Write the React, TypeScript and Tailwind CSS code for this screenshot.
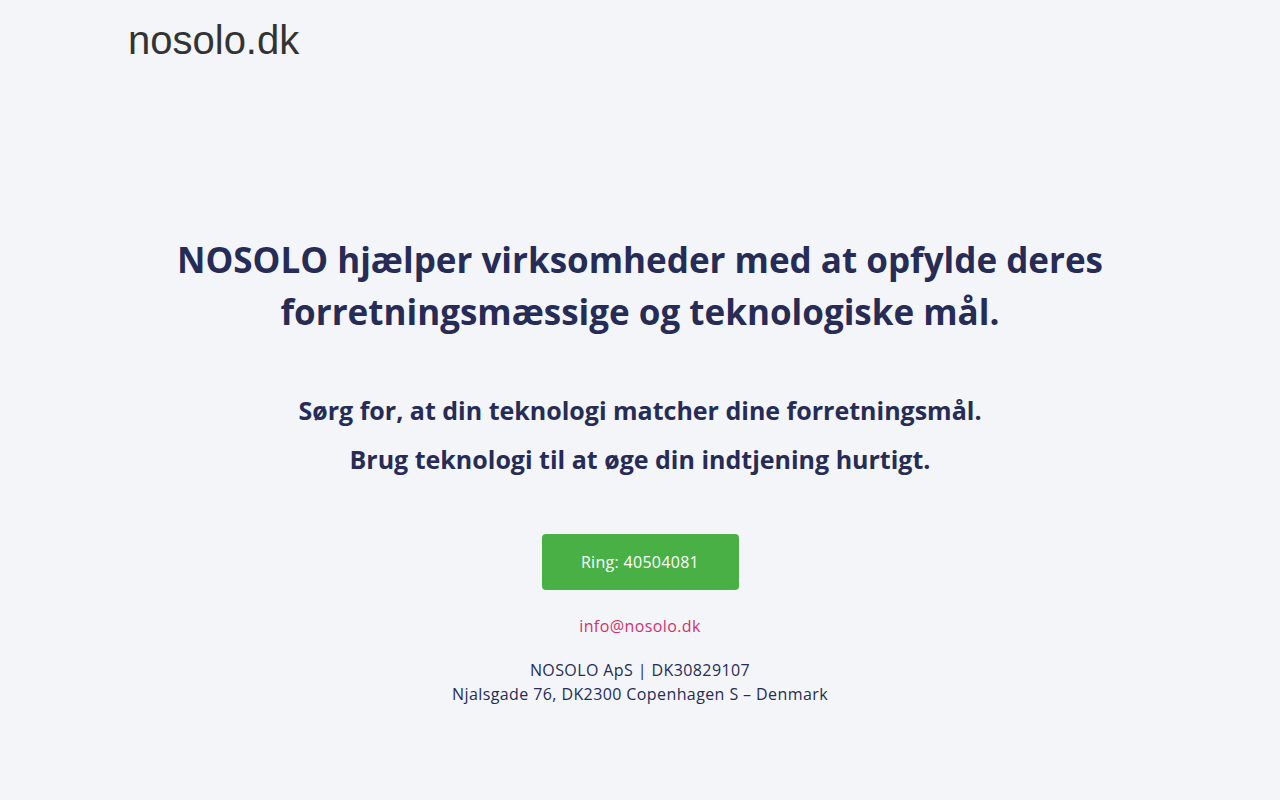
export default function App() {
  const font = { fontFamily: '"Open Sans", "Noto Sans", sans-serif' };
  return (
    <div className="min-h-[800px] bg-[#f3f5f9] text-[#262c55]" style={font}>
      <header className="max-w-[1024px] mx-auto pt-[16px]">
        <a
          href="#"
          className="text-[40px] leading-[48px] text-[#333333]"
          style={{ fontFamily: '"Liberation Sans", Arial, sans-serif' }}
        >
          nosolo.dk
        </a>
      </header>

      <main className="flex flex-col items-center text-center pt-[170px]">
        <h1 className="text-[35px] leading-[52px] font-bold max-w-[980px]">
          NOSOLO hjælper virksomheder med at opfylde deres forretningsmæssige og teknologiske mål.
        </h1>

        <div className="mt-[54px] flex flex-col gap-[13px]">
          <h2 className="text-[25px] leading-[36px] font-bold">
            Sørg for, at din teknologi matcher dine forretningsmål.
          </h2>
          <h2 className="text-[25px] leading-[36px] font-bold">
            Brug teknologi til at øge din indtjening hurtigt.
          </h2>
        </div>

        <a
          href="#"
          className="mt-[57px] w-[197px] h-[56px] flex items-center justify-center rounded-[4px] bg-[#48b045] text-white text-[16px] tracking-[0.3px]"
        >
          Ring: 40504081
        </a>

        <a href="#" className="mt-[24px] text-[16px] leading-[24px] tracking-[0.4px] text-[#d0336b]">
          info@nosolo.dk
        </a>

        <p className="mt-[20px] text-[16px] leading-[24px] tracking-[0.4px]">
          NOSOLO ApS | DK30829107
          <br />
          Njalsgade 76, DK2300 Copenhagen S – Denmark
        </p>
      </main>
    </div>
  );
}
